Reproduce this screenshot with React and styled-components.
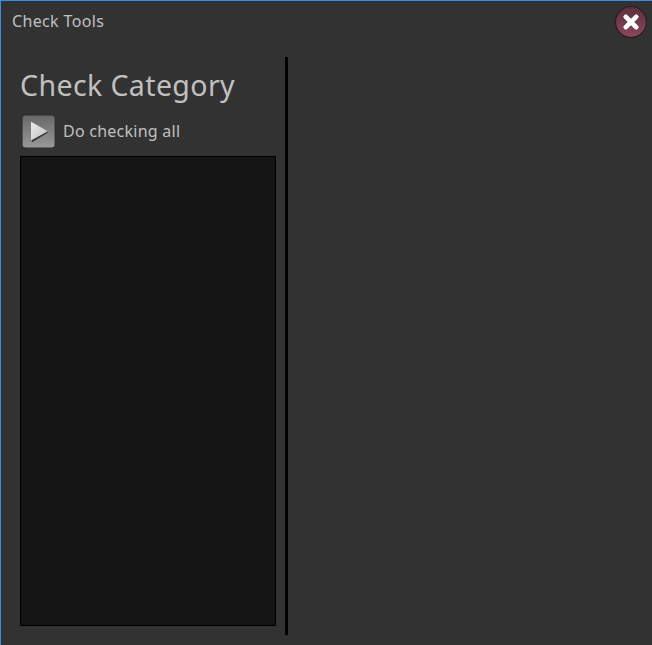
import React from 'react';
import styled, { createGlobalStyle } from 'styled-components';

const GlobalStyle = createGlobalStyle`
  * { box-sizing: border-box; }
  body { margin: 0; background: #323232; overflow: hidden; }
  button { padding: 0; border: 0; background: none; display: block; }
`;

const Window = styled.main`
  width: 652px;
  height: 645px;
  display: flex;
  flex-direction: column;
  background: #323232;
  border-top: 1px solid #3d8ee0;
  border-left: 1px solid #3d8ee0;
  color: #c0c0c0;
  font-family: 'Noto Sans', sans-serif;
  font-weight: 400;
`;

const TitleBar = styled.header`
  height: 56px;
  flex: none;
  display: flex;
  justify-content: space-between;
  align-items: flex-start;
  padding: 4px 4px 0 11px;
`;

const Title = styled.span`
  margin-top: 4px;
  font-size: 16px;
  line-height: 24px;
  letter-spacing: 0.35px;
`;

const Body = styled.div`
  display: flex;
  height: 578px;
`;

const Sidebar = styled.section`
  width: 284px;
  padding: 7px 9px 9px 19px;
  display: flex;
  flex-direction: column;
`;

const Heading = styled.h1`
  margin: 0;
  height: 44px;
  font-size: 28.5px;
  line-height: 43px;
  font-weight: 400;
  letter-spacing: 0.4px;
  white-space: nowrap;
`;

const Action = styled.div`
  height: 48px;
  padding: 6px 0 0 2px;
  display: flex;
  align-items: flex-start;
  gap: 7px;
`;

const ActionLabel = styled.span`
  margin-top: 5px;
  font-size: 16px;
  line-height: 24px;
  letter-spacing: 0.25px;
  white-space: nowrap;
`;

const CategoryList = styled.div`
  flex: 1;
  background: #141414;
  border: 1px solid #000;
`;

const Divider = styled.div`
  width: 3px;
  background: #000;
`;

const CloseIcon = () => (
  <svg width="34" height="34" viewBox="0 0 34 34" display="block">
    <defs>
      <linearGradient id="close" x1="0" y1="0" x2="0" y2="1">
        <stop offset="0" stopColor="#59303c" />
        <stop offset="1" stopColor="#8b485b" />
      </linearGradient>
    </defs>
    <circle cx="17" cy="17" r="15.5" fill="url(#close)" stroke="#291d20" strokeWidth="1.2" />
    <path d="M11.8 11.8 22.2 22.2M22.2 11.8 11.8 22.2" stroke="#fff" strokeWidth="4.5" strokeLinecap="round" />
    <path d="M11.8 11.8 22.2 22.2M22.2 11.8 11.8 22.2" stroke="#fff" strokeWidth="3.6" strokeLinecap="square" />
  </svg>
);

const PlayIcon = () => (
  <svg width="34" height="34" viewBox="0 0 34 34" display="block">
    <defs>
      <linearGradient id="plate" x1="0" y1="0" x2="0" y2="1">
        <stop offset="0" stopColor="#686868" />
        <stop offset="1" stopColor="#989898" />
      </linearGradient>
      <linearGradient id="arrow" x1="0" y1="0" x2="1" y2="1">
        <stop offset="0" stopColor="#eee" />
        <stop offset="1" stopColor="#bbb" />
      </linearGradient>
    </defs>
    <rect x="0" y=".8" width="33.4" height="33.2" rx="4" fill="#292929" />
    <rect x=".6" y="1.5" width="32" height="32" rx="3" fill="url(#plate)" />
    <path d="M9.3 26 25.6 17v1.8L10 28.2z" fill="#333" />
    <path d="M9 7.8 25.8 17.2 9 26.5z" fill="url(#arrow)" />
  </svg>
);

export default function App() {
  return (
    <>
      <GlobalStyle />
      <Window>
        <TitleBar>
          <Title>Check Tools</Title>
          <button aria-label="Close"><CloseIcon /></button>
        </TitleBar>
        <Body>
          <Sidebar>
            <Heading>Check Category</Heading>
            <Action>
              <button aria-label="Run all checks"><PlayIcon /></button>
              <ActionLabel>Do checking all</ActionLabel>
            </Action>
            <CategoryList />
          </Sidebar>
          <Divider />
        </Body>
      </Window>
    </>
  );
}
